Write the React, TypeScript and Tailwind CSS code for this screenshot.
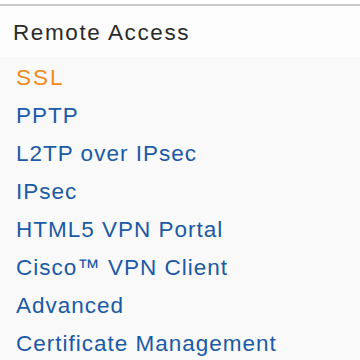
const items = [
  { label: 'SSL', active: true },
  { label: 'PPTP' },
  { label: 'L2TP over IPsec' },
  { label: 'IPsec' },
  { label: 'HTML5 VPN Portal' },
  { label: 'Cisco™ VPN Client' },
  { label: 'Advanced' },
  { label: 'Certificate Management' },
];

export default function App() {
  return (
    <div className="w-[360px] h-[360px] overflow-hidden bg-white font-[family-name:Liberation_Sans,Arial,sans-serif]">
      <div className="h-[4px] bg-white" />
      <div className="h-[2px] bg-[#c8c8c8]" />
      <div className="h-[51px] bg-[#fdfdfd] flex items-center pl-[13px] pt-[2px] text-[22.5px] tracking-[1.6px] text-[#2a2a2a]">
        Remote Access
      </div>
      <ul className="bg-[#f9f9f9] pt-[2px] pb-4">
        {items.map((item) => (
          <li
            key={item.label}
            className={`h-[38px] flex items-center pl-[16px] text-[22.5px] tracking-[1px] ${
              item.active ? 'text-[#f28a1a] tracking-[2px]' : 'text-[#1a5aa6]'
            }`}
          >
            {item.label}
          </li>
        ))}
      </ul>
    </div>
  );
}
